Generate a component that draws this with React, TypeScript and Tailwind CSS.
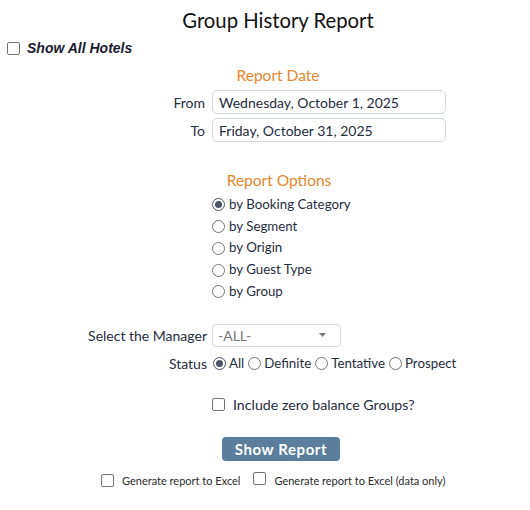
import React from "react";

function Radio({ checked }: { checked?: boolean }) {
  return (
    <span
      className={
        "inline-flex h-[13px] w-[13px] shrink-0 items-center justify-center rounded-full border bg-white " +
        (checked ? "border-[#4b5563]" : "border-[#767676]")
      }
    >
      {checked ? <span className="h-[7px] w-[7px] rounded-full bg-[#4b5563]" /> : null}
    </span>
  );
}

function Check() {
  return <span className="inline-block h-[13px] w-[13px] shrink-0 rounded-[2px] border border-[#767676] bg-white" />;
}

export default function App() {
  const options = ["by Booking Category", "by Segment", "by Origin", "by Guest Type", "by Group"];
  return (
    <div className="h-[510px] w-[530px] bg-white font-['Lato',sans-serif] text-[14px] text-[#1f2d3d]">
      <div className="flex justify-center pl-[26px] pt-[6px] text-[20.3px] leading-[28px] text-[#111]">
        Group History Report
      </div>

      <div className="mt-[4px] flex h-[20px] items-center pl-[7px]">
        <Check />
        <span className="ml-[7px] font-['Liberation_Sans',Arial,sans-serif] text-[14px] font-bold italic text-[#1a1a2e]">
          Show All Hotels
        </span>
      </div>

      <div className="mt-[7px] flex justify-center pl-[26px] text-[15.5px] leading-[20px] text-[#e8872a]">Report Date</div>

      <div className="mt-[5px] flex flex-col gap-[4px]">
        {[
          ["From", "Wednesday, October 1, 2025"],
          ["To", "Friday, October 31, 2025"],
        ].map(([l, v]) => (
          <div key={l} className="flex items-center">
            <span className="w-[205px] text-right">{l}</span>
            <div className="ml-[7px] flex h-[24px] w-[234px] items-center rounded-[5px] border border-[#d3d7dc] pl-[6px]">
              {v}
            </div>
          </div>
        ))}
      </div>

      <div className="mt-[28px] flex justify-center pl-[28px] text-[15.5px] leading-[20px] text-[#e8872a]">Report Options</div>

      <div className="mt-[4px] flex flex-col pl-[212px] text-[13.3px]">
        {options.map((o, i) => (
          <div key={o} className="flex h-[21.75px] items-center">
            <Radio checked={i === 0} />
            <span className="ml-[4px]">{o}</span>
          </div>
        ))}
      </div>

      <div className="mt-[21px] flex items-center">
        <span className="w-[207px] text-right">Select the Manager</span>
        <div className="ml-[5px] flex h-[23px] w-[129px] items-center justify-between rounded-[4px] border border-[#d9dce0] pl-[5px] pr-[14px] text-[#777]">
          <span>-ALL-</span>
          <svg width="7" height="4" viewBox="0 0 7 4">
            <path d="M0 0 L7 0 L3.5 4 Z" fill="#7a7a7a" />
          </svg>
        </div>
      </div>

      <div className="mt-[7px] flex h-[20px] items-center">
        <span className="w-[207px] text-right">Status</span>
        <span className="ml-[6px] flex items-center text-[13.3px]">
          <Radio checked />
          <span className="ml-[3px]">All</span>
        </span>
        <span className="ml-[4px] flex items-center text-[13.3px]">
          <Radio />
          <span className="ml-[3px]">Definite</span>
        </span>
        <span className="ml-[4px] flex items-center text-[13.3px]">
          <Radio />
          <span className="ml-[3px]">Tentative</span>
        </span>
        <span className="ml-[4px] flex items-center text-[13.3px]">
          <Radio />
          <span className="ml-[3px]">Prospect</span>
        </span>
      </div>

      <div className="mt-[21px] flex h-[20px] items-center pl-[212px]">
        <Check />
        <span className="ml-[8px] text-[14.2px]">Include zero balance Groups?</span>
      </div>

      <div className="mt-[22px] flex pl-[222px]">
        <button className="flex h-[24px] w-[118px] items-center justify-center rounded-[4px] bg-[#5b7e9e] text-[15px] font-bold tracking-[0.6px] text-white">
          Show Report
        </button>
      </div>

      <div className="mt-[12px] flex h-[16px] items-center pl-[101px] text-[11px] text-[#2b2b2b]">
        <Check />
        <span className="ml-[8px]">Generate report to Excel</span>
        <span className="ml-[13px]">
          <Check />
        </span>
        <span className="ml-[8px]">Generate report to Excel (data only)</span>
      </div>
    </div>
  );
}
